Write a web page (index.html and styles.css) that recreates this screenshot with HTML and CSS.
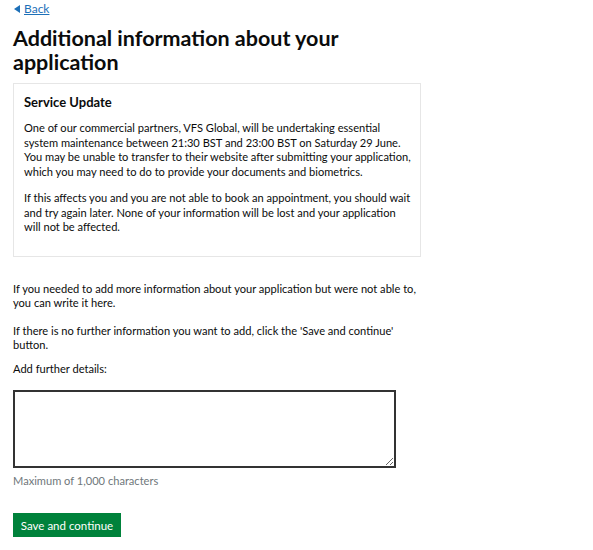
FILE: index.html
```html
<!DOCTYPE html>
<html lang="en">
<head>
  <meta charset="UTF-8" />
  <meta name="viewport" content="width=device-width, initial-scale=1.0"/>
  <title>Additional information about your application</title>
  <link rel="stylesheet" href="styles.css">
</head>
<body>
  <div class="page">
    <a href="#" class="back-link"><span class="back-arrow"></span>Back</a>
    <h1>Additional information about your application</h1>

    <div class="notice">
      <h2>Service Update</h2>
      <p>One of our commercial partners, VFS Global, will be undertaking essential system maintenance between 21:30 BST and 23:00 BST on Saturday 29 June. You may be unable to transfer to their website after submitting your application, which you may need to do to provide your documents and biometrics.</p>
      <p>If this affects you and you are not able to book an appointment, you should wait and try again later. None of your information will be lost and your application will not be affected.</p>
    </div>

    <p class="intro">If you needed to add more information about your application but were not able to, you can write it here.</p>
    <p class="last">If there is no further information you want to add, click the 'Save and continue' button.</p>

    <label for="details">Add further details:</label>
    <textarea id="details"></textarea>
    <div class="hint">Maximum of 1,000 characters</div>

    <button>Save and continue</button>
  </div>
</body>
</html>
```

FILE: styles.css
```css
body {
  margin: 0;
  background: #fff;
  font-family: Lato, "Noto Sans", Arial, sans-serif;
  color: #0b0c0c;
}
.page {
  width: 410px;
  padding: 2px 13px 0 13px;
}
.back-link {
  display: flex;
  width: fit-content;
  align-items: center;
  color: #1d70b8;
  font-size: 12px;
  line-height: 14px;
  text-decoration: underline;
}
.back-arrow {
  width: 0; height: 0;
  border-top: 4px solid transparent;
  border-bottom: 4px solid transparent;
  border-right: 6px solid #1d70b8;
  margin: 0 4px 0 1px;
}
h1 {
  font-size: 21.5px;
  line-height: 24px;
  margin: 10px 0 9px;
  width: 345px;
  font-weight: 700;
}
.notice {
  width: 388px;
  border: 1px solid #e6e6e6;
  padding: 10px 8px 21px 10px;
}
h2 {
  font-size: 13px;
  line-height: 16px;
  margin: 0 0 11px;
}
p {
  font-size: 11.1px;
  line-height: 14.5px;
  margin: 0 0 13px;
}
.notice p { margin-bottom: 12px; }
.notice p:last-child { margin-bottom: 0; }
.intro { margin-top: 25px; }
p.last { margin-bottom: 9px; }
label {
  display: block;
  font-size: 11.1px;
  line-height: 14.5px;
  margin-bottom: 14px;
}
textarea {
  display: block;
  box-sizing: border-box;
  width: 383px;
  height: 78px;
  border: 2px solid #333;
  margin: 0;
}
.hint {
  color: #6f777b;
  font-size: 11.1px;
  line-height: 14px;
  margin-top: 6px;
}
button {
  display: block;
  margin-top: 25px;
  background: #00823b;
  color: #fff;
  border: none;
  font-family: inherit;
  font-size: 11.5px;
  white-space: nowrap;
  padding: 0;
  width: 108px;
  height: 24px;
}
```
